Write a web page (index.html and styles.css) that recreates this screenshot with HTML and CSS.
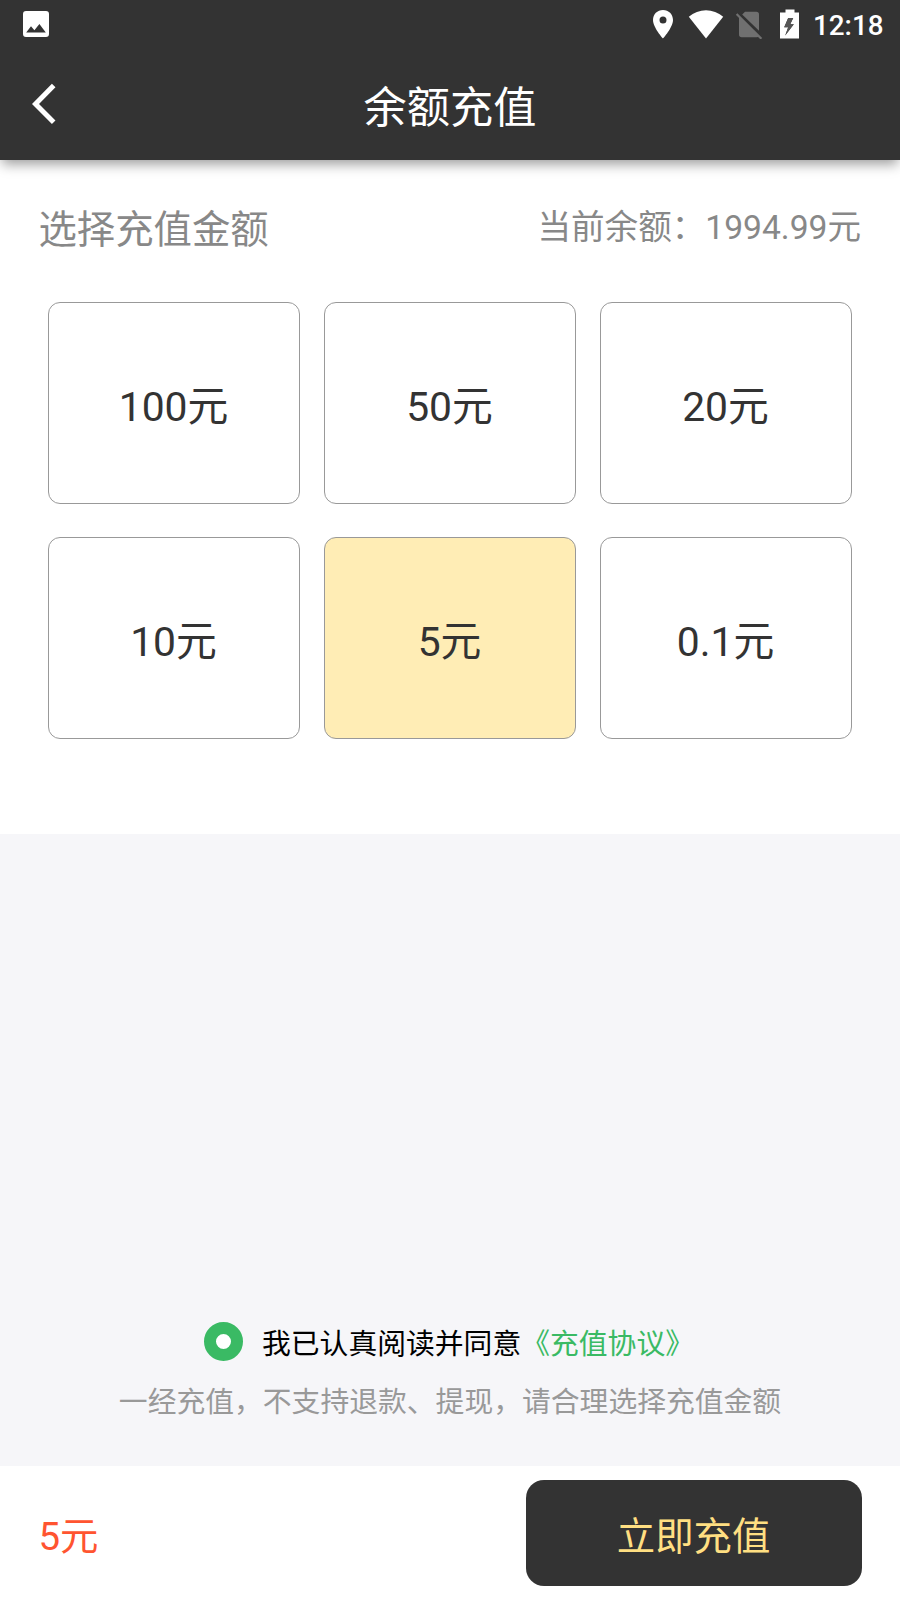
FILE: index.html
```html
<!DOCTYPE html>
<html lang="zh-CN">
<head>
<meta charset="utf-8">
<title>余额充值</title>
<link rel="stylesheet" href="styles.css">
</head>
<body>
<div class="screen">
  <header class="header">
    <div class="status">
      <svg class="photo" width="26" height="26" viewBox="0 0 26 26"><path fill="#fff" fill-rule="evenodd" d="M3 0H23Q26 0 26 3V23Q26 26 23 26H3Q0 26 0 23V3Q0 0 3 0ZM3.2 21.6H22.8L16.4 13L11.4 19.3L8 15.2Z"/></svg>
      <svg class="signals" width="150" height="30" viewBox="0 0 150 30">
        <path fill="#fff" fill-rule="evenodd" d="M11 1C5.300 1 1 5.300 1 11C1 18.500 11 29.500 11 29.500S21 18.500 21 11C21 5.300 16.700 1 11 1ZM11 7.400A3.500 3.500 0 1 1 11 14.400A3.500 3.500 0 1 1 11 7.400Z"/>
        <path fill="#fff" d="M36.800 7.700C46.500-1 61.500-1 71.200 7.700L54 29.500Z"/>
        <path fill="#707070" d="M93 2.800H104.300Q107 2.800 107 5.500V21.800L90.200 5.600ZM87 8L107 27.500Q106.500 28.300 104.500 28.300H89.700Q87 28.300 87 25.600Z"/>
        <path stroke="#707070" stroke-width="2.200" d="M84.600 5L109.400 29.800"/>
        <path fill="#fff" fill-rule="evenodd" d="M133.500 .5H142.500V3.500H147V29.500H128V3.500H133.500ZM136.200 9L132.200 18.300H136.200L133.200 26.500L141.800 15.200H138.200L141.200 9Z"/>
        <path fill="#555" d="M136.200 9L132.200 18.300H136.200L133.200 26.500L141.800 15.200H138.200L141.200 9Z"/>
      </svg>
      <span class="clock">12:18</span>
    </div>
    <div class="navbar">
      <svg class="back" width="25" height="42" viewBox="0 0 25 42"><path d="M21.700 2.500L3.500 21L21.700 39.300" fill="none" stroke="#fff" stroke-width="5"/></svg>
      <h1 class="title">余额充值</h1>
      <span></span>
    </div>
  </header>
  <main class="panel">
    <div class="summary">
      <h2 class="label">选择充值金额</h2>
      <span class="balance">当前余额：1994.99元</span>
    </div>
    <div class="amounts">
      <button class="amount">100元</button>
      <button class="amount">50元</button>
      <button class="amount">20元</button>
      <button class="amount">10元</button>
      <button class="amount selected">5元</button>
      <button class="amount">0.1元</button>
    </div>
  </main>
  <section class="terms">
    <div class="agree"><span class="radio"></span><span>我已认真阅读并同意</span><a class="link">《充值协议》</a></div>
    <p class="note">一经充值，不支持退款、提现，请合理选择充值金额</p>
  </section>
  <footer class="footer">
    <span class="total">5元</span>
    <button class="pay">立即充值</button>
  </footer>
</div>
</body>
</html>
```
FILE: styles.css
```css
* { box-sizing: border-box; }
body { margin: 0; font-family: Roboto, "Noto Sans CJK SC", sans-serif; background: #f6f6f9; }
h1, h2, p { margin: 0; font-weight: 400; }
svg { display: block; }
button { font: inherit; padding: 0; }
.screen { width: 900px; height: 1600px; display: flex; flex-direction: column; overflow: hidden; }
.header { height: 160px; background: #333; box-shadow: 0 6px 12px -2px rgba(0, 0, 0, .4); z-index: 1; flex: none; }
.status { height: 48px; display: flex; align-items: flex-start; padding: 0 15px 0 23px; }
.photo { margin-top: 11px; }
.signals { margin: 8.500px 0 0 auto; }
.clock { width: 72px; margin-left: 11px; line-height: 51px; font-size: 27.800px; font-weight: 500; color: #fff; white-space: nowrap; }
.navbar { height: 112px; display: grid; grid-template-columns: 1fr auto 1fr; }
.back { margin: 35px 0 0 32px; }
.title { font-size: 43.200px; line-height: 121px; color: #fff; height: 112px; }
.panel { height: 674px; flex: none; background: #fff; padding-top: 42px; }
.summary { height: 100px; padding: 0 39px 0 38.400px; display: flex; justify-content: space-between; color: #888; }
.label { font-size: 38.400px; line-height: 56px; }
.balance { font-size: 33.600px; line-height: 52px; }
.amounts { display: grid; grid-template-columns: repeat(3, 252px); grid-auto-rows: 201.600px; gap: 33.600px 24px; padding-left: 48px; }
.amount { border: 1px solid #999; border-radius: 12px; background: #fff; color: #333; font-size: 40.800px; line-height: 60px; padding: 9px 1px 0 0; }
.selected { background: #ffedb5; }
.terms { flex: 1; display: flex; flex-direction: column; justify-content: flex-end; padding-bottom: 42px; font-size: 28.800px; }
.agree { display: flex; align-items: center; height: 44px; padding-left: 204px; color: #000; }
.radio { width: 39px; height: 39px; border: 12px solid #3aba64; border-radius: 50%; background: #fff; margin-right: 19px; }
.link { color: #3aba64; }
.note { margin-top: 16px; line-height: 44px; text-align: center; color: #999; }
.footer { height: 134.400px; flex: none; background: #fff; padding: 14.400px 38.400px; display: flex; justify-content: space-between; font-size: 38.400px; }
.total { color: #ff5430; line-height: 114px; height: 105px; }
.pay { width: 336px; height: 105.600px; border: 0; border-radius: 18px; background: #333; color: #ffdf82; padding: 0; }
```
